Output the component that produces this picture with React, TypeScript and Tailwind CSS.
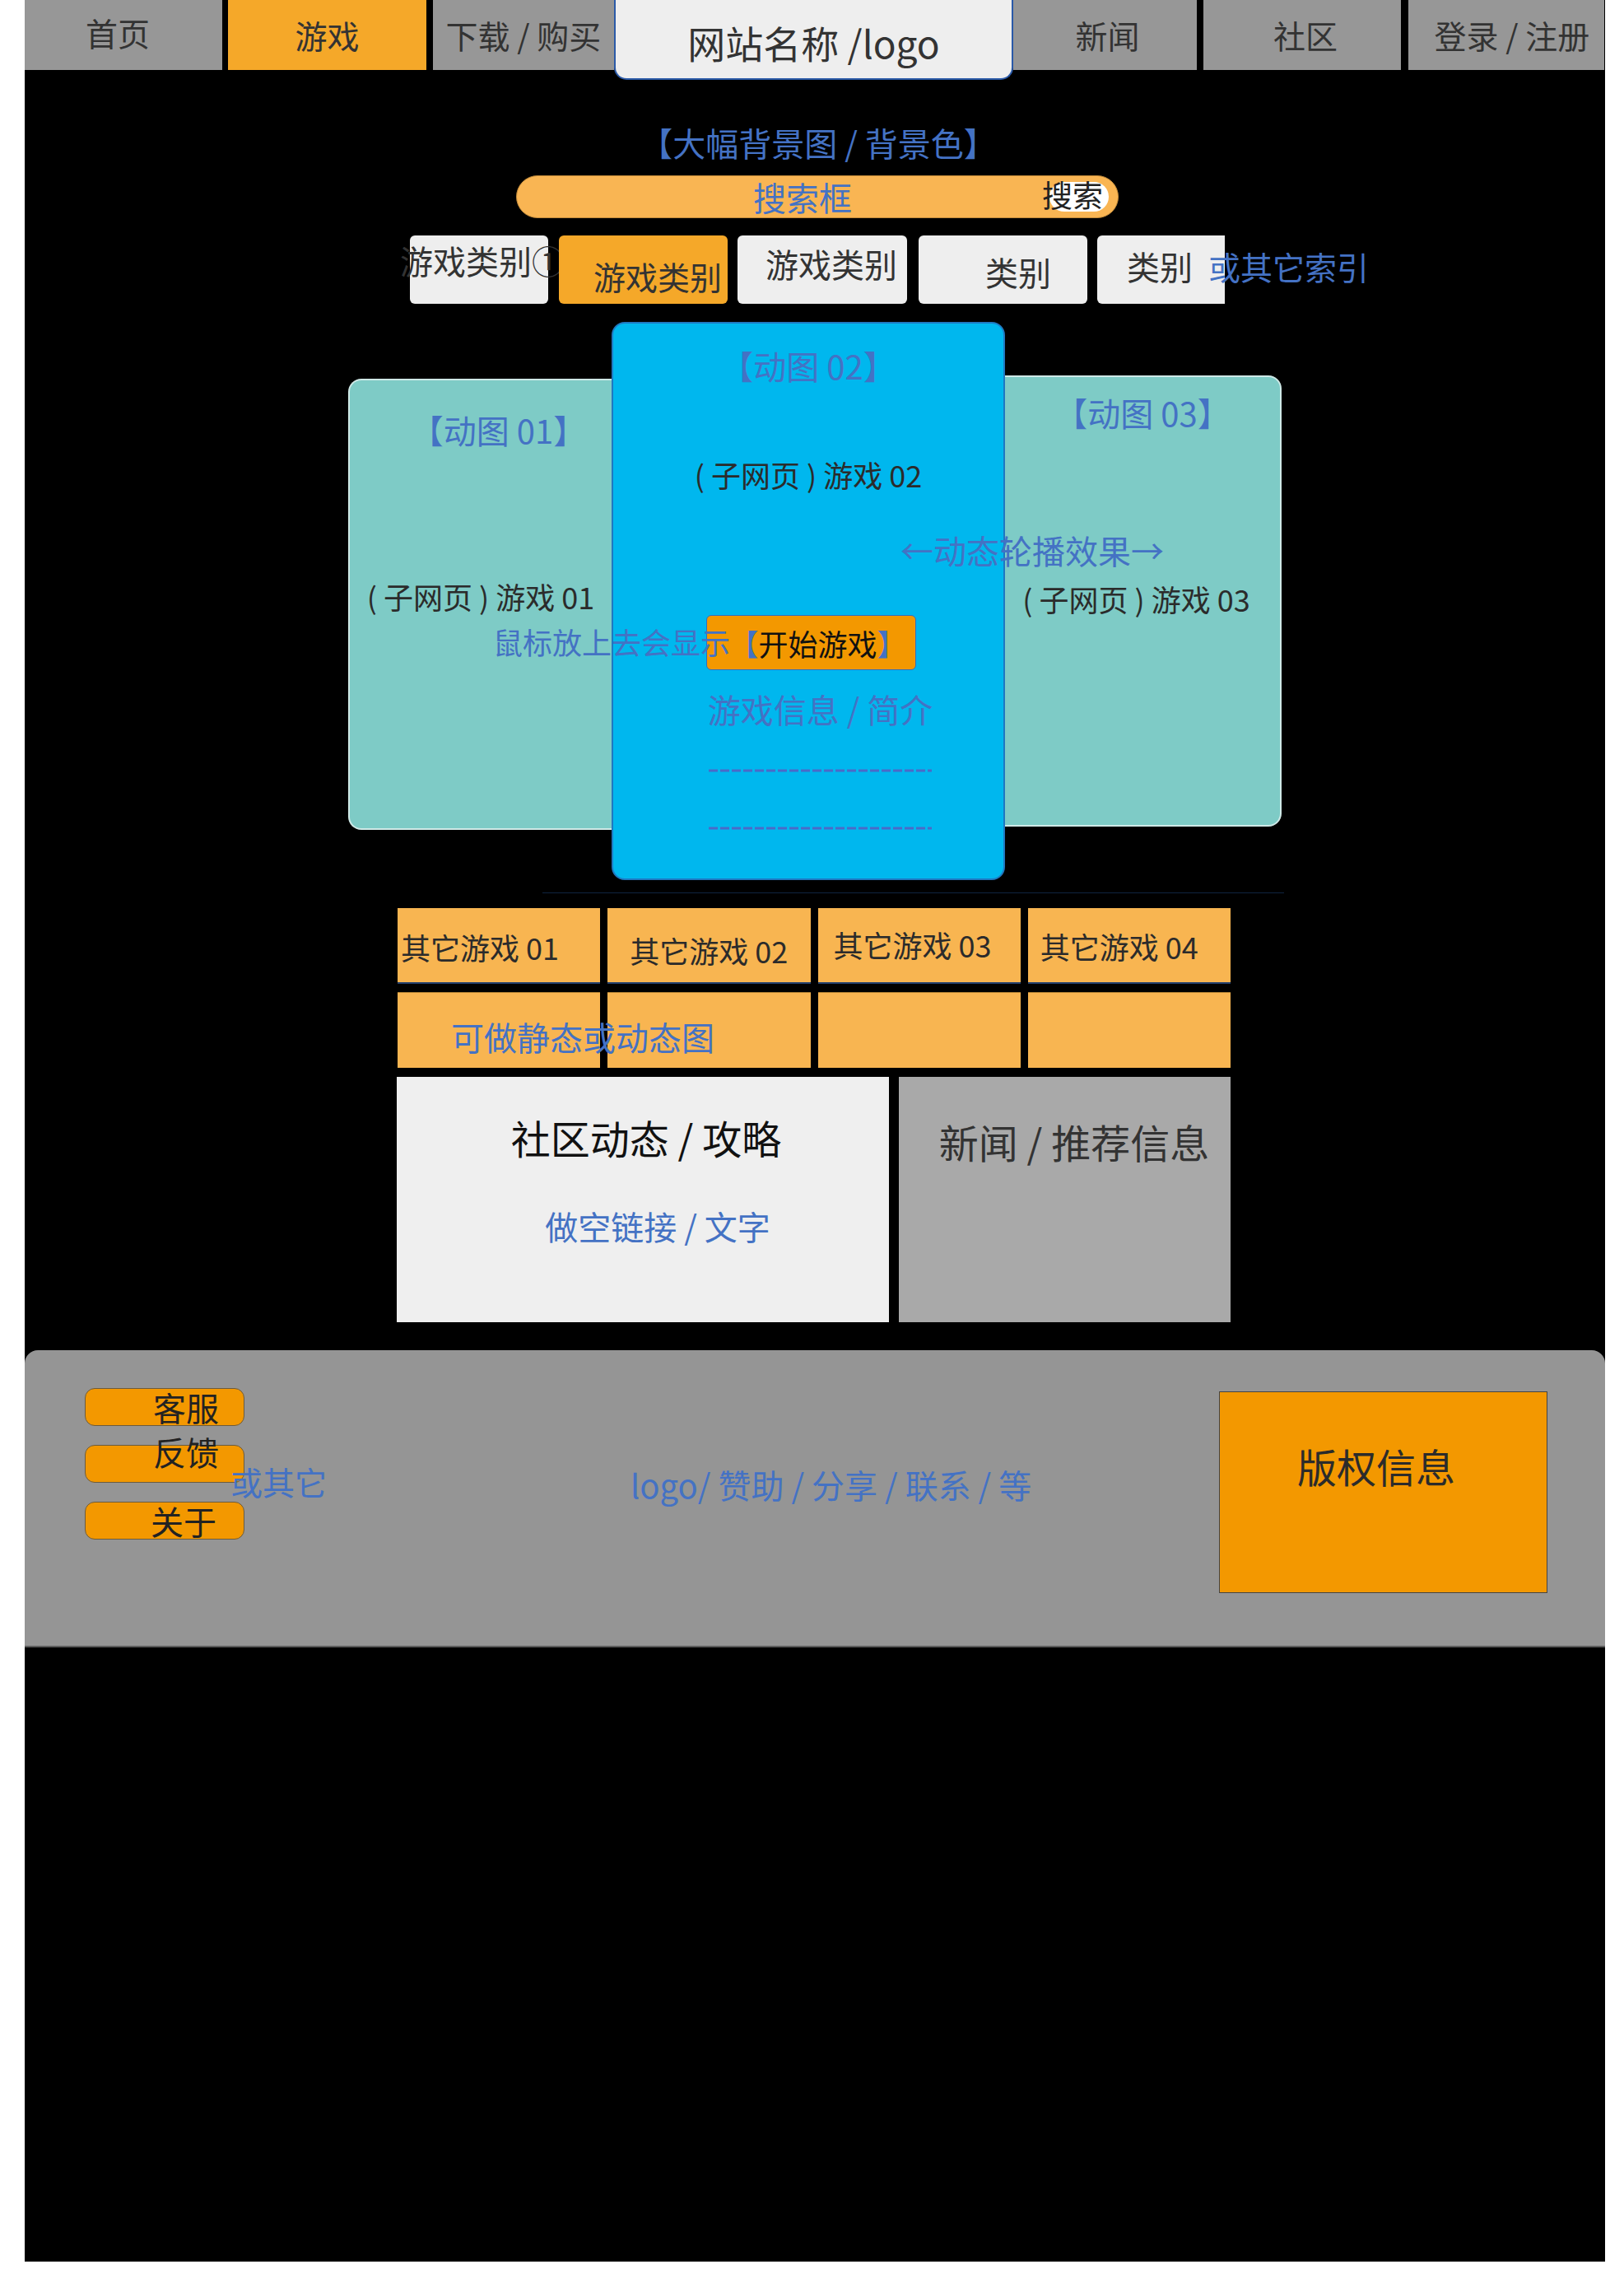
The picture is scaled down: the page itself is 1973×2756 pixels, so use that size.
const navTab = "flex h-[85px] items-center justify-center text-[39px] text-[#333]";
const blueText = "text-[#4472c4]";

function Dashes() {
  return (
    <svg width="271" height="4" className="block">
      <line x1="0" y1="2" x2="271" y2="2" stroke="#4a6ac8" strokeWidth="3" strokeDasharray="11 3" />
    </svg>
  );
}

export default function App() {
  return (
    <div className="min-h-[2756px] bg-white font-['Noto_Sans_CJK_SC','Noto_Sans',sans-serif] leading-none">
      <div className="ml-[30px] flex h-[2747px] w-[1920px] flex-col bg-black">
        {/* top nav */}
        <div className="flex h-[97px] items-start">
          <div className={`${navTab} w-[240px] bg-[#979797] pr-[14px] pb-[6px]`}>首页</div>
          <div className={`${navTab} ml-[7px] w-[241px] bg-[#f5a829]`}>游戏</div>
          <div className={`${navTab} ml-[8px] w-[220px] bg-[#979797]`}>下载 / 购买</div>
          <div className="flex h-[97px] w-[485px] items-center justify-center rounded-b-[15px] border-2 border-t-0 border-[#2b5aa8] bg-[#eeeeee] pt-[6px] text-[46px] text-[#333]">
            网站名称 /logo
          </div>
          <div className={`${navTab} w-[223px] bg-[#979797] pl-[6px]`}>新闻</div>
          <div className={`${navTab} ml-[8px] w-[240px] bg-[#979797] pl-[8px]`}>社区</div>
          <div className={`${navTab} ml-[9px] w-[238px] bg-[#979797] pl-[14px]`}>登录 / 注册</div>
        </div>

        <p className={`mt-[56px] pl-[8px] text-center text-[40px] ${blueText}`}>【大幅背景图 / 背景色】</p>

        {/* search */}
        <div className="mt-[20px] ml-[597px] flex h-[52px] w-[732px] items-center rounded-full border-[1.5px] border-[#c38b3a] bg-[#f9b553] pl-[287px]">
          <span className={`text-[40px] ${blueText}`}>搜索框</span>
          <div className="relative mr-[11px] ml-auto h-[36px] w-[72px] rounded-full bg-white">
            <span className="absolute top-[-3px] left-[-9px] whitespace-nowrap text-[37px] text-[#222]">搜索</span>
          </div>
        </div>

        {/* categories */}
        <div className="mt-[21px] ml-[468px] flex h-[83px] items-start">
          <div className="h-[83px] w-[168px] shrink-0 whitespace-nowrap rounded-[6px] bg-[#eeeeee] pt-[10px]">
            <span className="-ml-[12px] inline-block text-[40px] text-[#333]">游戏类别①</span>
          </div>
          <div className="ml-[13px] h-[83px] w-[205px] shrink-0 rounded-[6px] bg-[#f5a829] pt-[30px] pl-[42px] text-[39px] text-[#333]">
            游戏类别
          </div>
          <div className="ml-[12px] h-[83px] w-[206px] shrink-0 rounded-[6px] bg-[#eeeeee] pt-[14px] pl-[34px] text-[40px] text-[#333]">
            游戏类别
          </div>
          <div className="ml-[14px] h-[83px] w-[205px] shrink-0 rounded-[6px] bg-[#eeeeee] pt-[24px] pl-[81px] text-[40px] text-[#333]">
            类别
          </div>
          <div className="ml-[12px] h-[83px] w-[155px] shrink-0 rounded-l-[6px] bg-[#eeeeee] pt-[17px] pl-[36px] text-[40px] text-[#333]">
            类别
          </div>
          <span className={`relative -ml-[20px] mt-[18px] whitespace-nowrap text-[39px] ${blueText}`}>或其它索引</span>
        </div>

        {/* carousel */}
        <div className="relative mt-[22px] ml-[393px] flex h-[678px] items-start">
          <div className="mt-[69px] flex h-[548px] w-[320px] flex-col items-center rounded-l-[16px] border-2 border-r-0 border-[#cfe9e7] bg-[#7ecbc6]">
            <p className={`mt-[40px] pl-[43px] text-[40px] ${blueText}`}>【动图 01】</p>
            <p className="mt-[164px] whitespace-nowrap text-[36px] text-[#2b2b2b]">( 子网页 ) 游戏 01</p>
          </div>
          <div className="relative z-10 flex h-[678px] w-[478px] flex-col items-center rounded-[16px] border-2 border-[#1f78c1] bg-[#00b7ee]">
            <p className={`mt-[31px] text-[40px] ${blueText}`}>【动图 02】</p>
            <p className="mt-[94px] whitespace-nowrap text-[36px] text-[#2b2b2b]">( 子网页 ) 游戏 02</p>
            <div className="mt-[153px] ml-[7px] flex h-[67px] w-[255px] items-center justify-center rounded-[6px] border border-[#2e6fc0] bg-[#f39800] pl-[16px] text-[36px]">
              <span className={blueText}>【</span>
              <span className="text-[#111]">开始游戏</span>
              <span className={blueText}>】</span>
            </div>
            <p className={`mt-[27px] pl-[29px] whitespace-nowrap text-[40px] ${blueText}`}>游戏信息 / 简介</p>
            <div className="mt-[53px] ml-[29px]">
              <Dashes />
            </div>
            <div className="mt-[66px] ml-[29px]">
              <Dashes />
            </div>
          </div>
          <div className="mt-[65px] flex h-[548px] w-[336px] flex-col items-center rounded-r-[16px] border-2 border-l-0 border-[#cfe9e7] bg-[#7ecbc6]">
            <p className={`mt-[23px] text-[40px] ${blueText}`}>【动图 03】</p>
            <p className="mt-[188px] pr-[15px] whitespace-nowrap text-[36px] text-[#2b2b2b]">( 子网页 ) 游戏 03</p>
          </div>
          <span className={`absolute top-[370px] left-[176px] z-20 whitespace-nowrap text-[36px] ${blueText}`}>鼠标放上去会显示</span>
          <span className={`absolute top-[257px] left-[671px] z-20 whitespace-nowrap text-[40px] ${blueText}`}>←动态轮播效果→</span>
        </div>

        <div className="mt-[15px] ml-[629px] h-px w-[901px] bg-[#0f2440]" />

        {/* other games */}
        <div className="relative mt-[18px] ml-[453px] grid w-[1012px] grid-cols-4 gap-x-[9px] gap-y-[10px] text-[36px] text-[#2b2b2b]">
          <div className="h-[92px] border-b-2 border-[#23406e] bg-[#f8b551] pt-[29px] pl-[4px] whitespace-nowrap">其它游戏 01</div>
          <div className="h-[92px] border-b-2 border-[#23406e] bg-[#f8b551] pt-[33px] pl-[27px] whitespace-nowrap">其它游戏 02</div>
          <div className="h-[92px] border-b-2 border-[#23406e] bg-[#f8b551] pt-[26px] pl-[19px] whitespace-nowrap">其它游戏 03</div>
          <div className="h-[92px] border-b-2 border-[#23406e] bg-[#f8b551] pt-[28px] pl-[15px] whitespace-nowrap">其它游戏 04</div>
          <div className="h-[92px] border-t border-[#b58535] bg-[#f8b551]" />
          <div className="h-[92px] border-t border-[#b58535] bg-[#f8b551]" />
          <div className="h-[92px] border-t border-[#b58535] bg-[#f8b551]" />
          <div className="h-[92px] border-t border-[#b58535] bg-[#f8b551]" />
          <span className={`absolute top-[136px] left-[65px] whitespace-nowrap text-[40px] ${blueText}`}>可做静态或动态图</span>
        </div>

        {/* community / news */}
        <div className="mt-[11px] ml-[452px] flex gap-[12px]">
          <div className="flex h-[298px] w-[598px] flex-col items-center bg-[#efefef]">
            <p className="mt-[49px] pl-[8px] whitespace-nowrap text-[48px] text-[#111]">社区动态 / 攻略</p>
            <p className={`mt-[64px] pl-[36px] whitespace-nowrap text-[40px] ${blueText}`}>做空链接 / 文字</p>
          </div>
          <div className="flex h-[298px] w-[403px] flex-col items-center bg-[#a9a9a9]">
            <p className="mt-[54px] pl-[23px] whitespace-nowrap text-[48px] text-[#333]">新闻 / 推荐信息</p>
          </div>
        </div>

        {/* footer */}
        <div className="mt-[34px] flex h-[361px] items-start rounded-t-[16px] border-b-2 border-[#5a5a5a] bg-[#959595]">
          <div className="mt-[46px] ml-[73px] flex shrink-0 flex-col gap-[23px] text-[40px] text-[#222]">
            <div className="flex h-[46px] w-[194px] items-center rounded-[12px] border-[1.5px] border-[#6b5b3e] bg-[#f39800] pl-[82px]">客服</div>
            <div className="flex h-[46px] w-[194px] items-start rounded-[12px] border-[1.5px] border-[#6b5b3e] bg-[#f39800] pl-[82px]">
              <span className="-mt-[13px]">反馈</span>
            </div>
            <div className="flex h-[46px] w-[194px] items-center rounded-[12px] border-[1.5px] border-[#6b5b3e] bg-[#f39800] pl-[79px]">关于</div>
          </div>
          <span className={`-ml-[17px] mt-[140px] w-[117px] shrink-0 whitespace-nowrap text-[39px] ${blueText}`}>或其它</span>
          <span className={`mt-[143px] ml-[369px] shrink-0 whitespace-nowrap text-[40px] ${blueText}`}>logo/ 赞助 / 分享 / 联系 / 等</span>
          <div className="mt-[50px] mr-[70px] ml-auto h-[245px] w-[399px] shrink-0 border border-[#444] bg-[#f39800] pt-[65px] pr-[17px] text-center text-[48px] text-[#2b2b2b]">
            版权信息
          </div>
        </div>
      </div>
    </div>
  );
}
